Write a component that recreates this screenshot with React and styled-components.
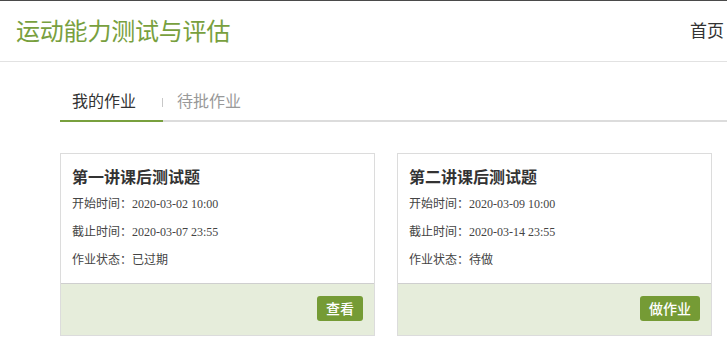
import React from "react";
import styled, { createGlobalStyle } from "styled-components";

const Global = createGlobalStyle`
  html, body { margin: 0; padding: 0; background: #fff; overflow: hidden; }
  body { font-family: "Noto Sans CJK SC", "Noto Sans", sans-serif; }
  * { box-sizing: border-box; }
`;

const Page = styled.div`
  width: 727px;
  min-height: 356px;
  border-top: 1px solid #4a4a4a;
`;

const Header = styled.header`
  height: 61px;
  display: flex;
  align-items: center;
  justify-content: space-between;
  padding: 0 3px 0 16px;
  border-bottom: 1px solid #e2e2e2;
`;

const Brand = styled.h1`
  margin: 0;
  font-size: 24px;
  font-weight: 400;
  color: #78a03e;
  letter-spacing: -0.2px;
  line-height: 1;
  margin-top: -2px;
`;

const NavLink = styled.a`
  font-size: 17px;
  color: #333;
  text-decoration: none;
  margin-top: -4px;
`;

const Main = styled.main`
  margin-left: 60px;
  padding-top: 20px;
`;

const TabBar = styled.nav`
  display: flex;
  align-items: flex-end;
  border-bottom: 2px solid #dcdcdc;
  height: 40px;
`;

const Tab = styled.div`
  display: flex;
  align-items: center;
  height: 40px;
  padding-left: ${(p) => p.$pl}px;
  width: ${(p) => p.$w}px;
  font-size: 16px;
  color: ${(p) => (p.$active ? "#333" : "#999")};
  border-bottom: 2px solid ${(p) => (p.$active ? "#78a03e" : "transparent")};
  margin-bottom: -2px;
  padding-bottom: 2px;
  position: relative;
`;

const Sep = styled.span`
  position: absolute;
  right: 0;
  top: 16px;
  width: 1px;
  height: 9px;
  background: #c8c8c8;
`;

const Cards = styled.div`
  display: flex;
  gap: 22px;
  margin-top: 31px;
`;

const Card = styled.section`
  width: 315px;
  height: 183px;
  border: 1px solid #dcdcdc;
  display: flex;
  flex-direction: column;
  flex-shrink: 0;
`;

const CardBody = styled.div`
  flex: 1;
  padding: 12px 11px 0;
  font-family: "Liberation Serif", "Noto Sans CJK SC", serif;
`;

const CardTitle = styled.h2`
  margin: 0;
  font-size: 16px;
  line-height: 24px;
  font-weight: 700;
  color: #333;
`;

const InfoLine = styled.div`
  font-size: 12px;
  line-height: 28px;
  color: #444;
`;

const CardFooter = styled.div`
  height: 52px;
  border-top: 1px solid #cfcfcf;
  background: #e6eddb;
  display: flex;
  justify-content: flex-end;
  align-items: flex-start;
  padding: 12px 11px 0 0;
`;

const Button = styled.button`
  height: 25px;
  padding: 0 9px;
  border: none;
  border-radius: 3px;
  background: #759b35;
  color: #fff;
  font-family: "Noto Sans CJK SC", sans-serif;
  font-size: 14px;
  font-weight: 500;
  line-height: 25px;
  cursor: pointer;
`;

const assignments = [
  { title: "第一讲课后测试题", start: "2020-03-02 10:00", end: "2020-03-07 23:55", status: "已过期", action: "查看" },
  { title: "第二讲课后测试题", start: "2020-03-09 10:00", end: "2020-03-14 23:55", status: "待做", action: "做作业" },
];

export default function App() {
  return (
    <>
      <Global />
      <Page>
        <Header>
          <Brand>运动能力测试与评估</Brand>
          <NavLink href="#">首页</NavLink>
        </Header>
        <Main>
          <TabBar>
            <Tab $active $pl={12} $w={103}>
              我的作业
              <Sep />
            </Tab>
            <Tab $pl={14} $w={120}>待批作业</Tab>
          </TabBar>
          <Cards>
            {assignments.map((a) => (
              <Card key={a.title}>
                <CardBody>
                  <CardTitle>{a.title}</CardTitle>
                  <InfoLine>开始时间：{a.start}</InfoLine>
                  <InfoLine>截止时间：{a.end}</InfoLine>
                  <InfoLine>作业状态：{a.status}</InfoLine>
                </CardBody>
                <CardFooter>
                  <Button>{a.action}</Button>
                </CardFooter>
              </Card>
            ))}
          </Cards>
        </Main>
      </Page>
    </>
  );
}
